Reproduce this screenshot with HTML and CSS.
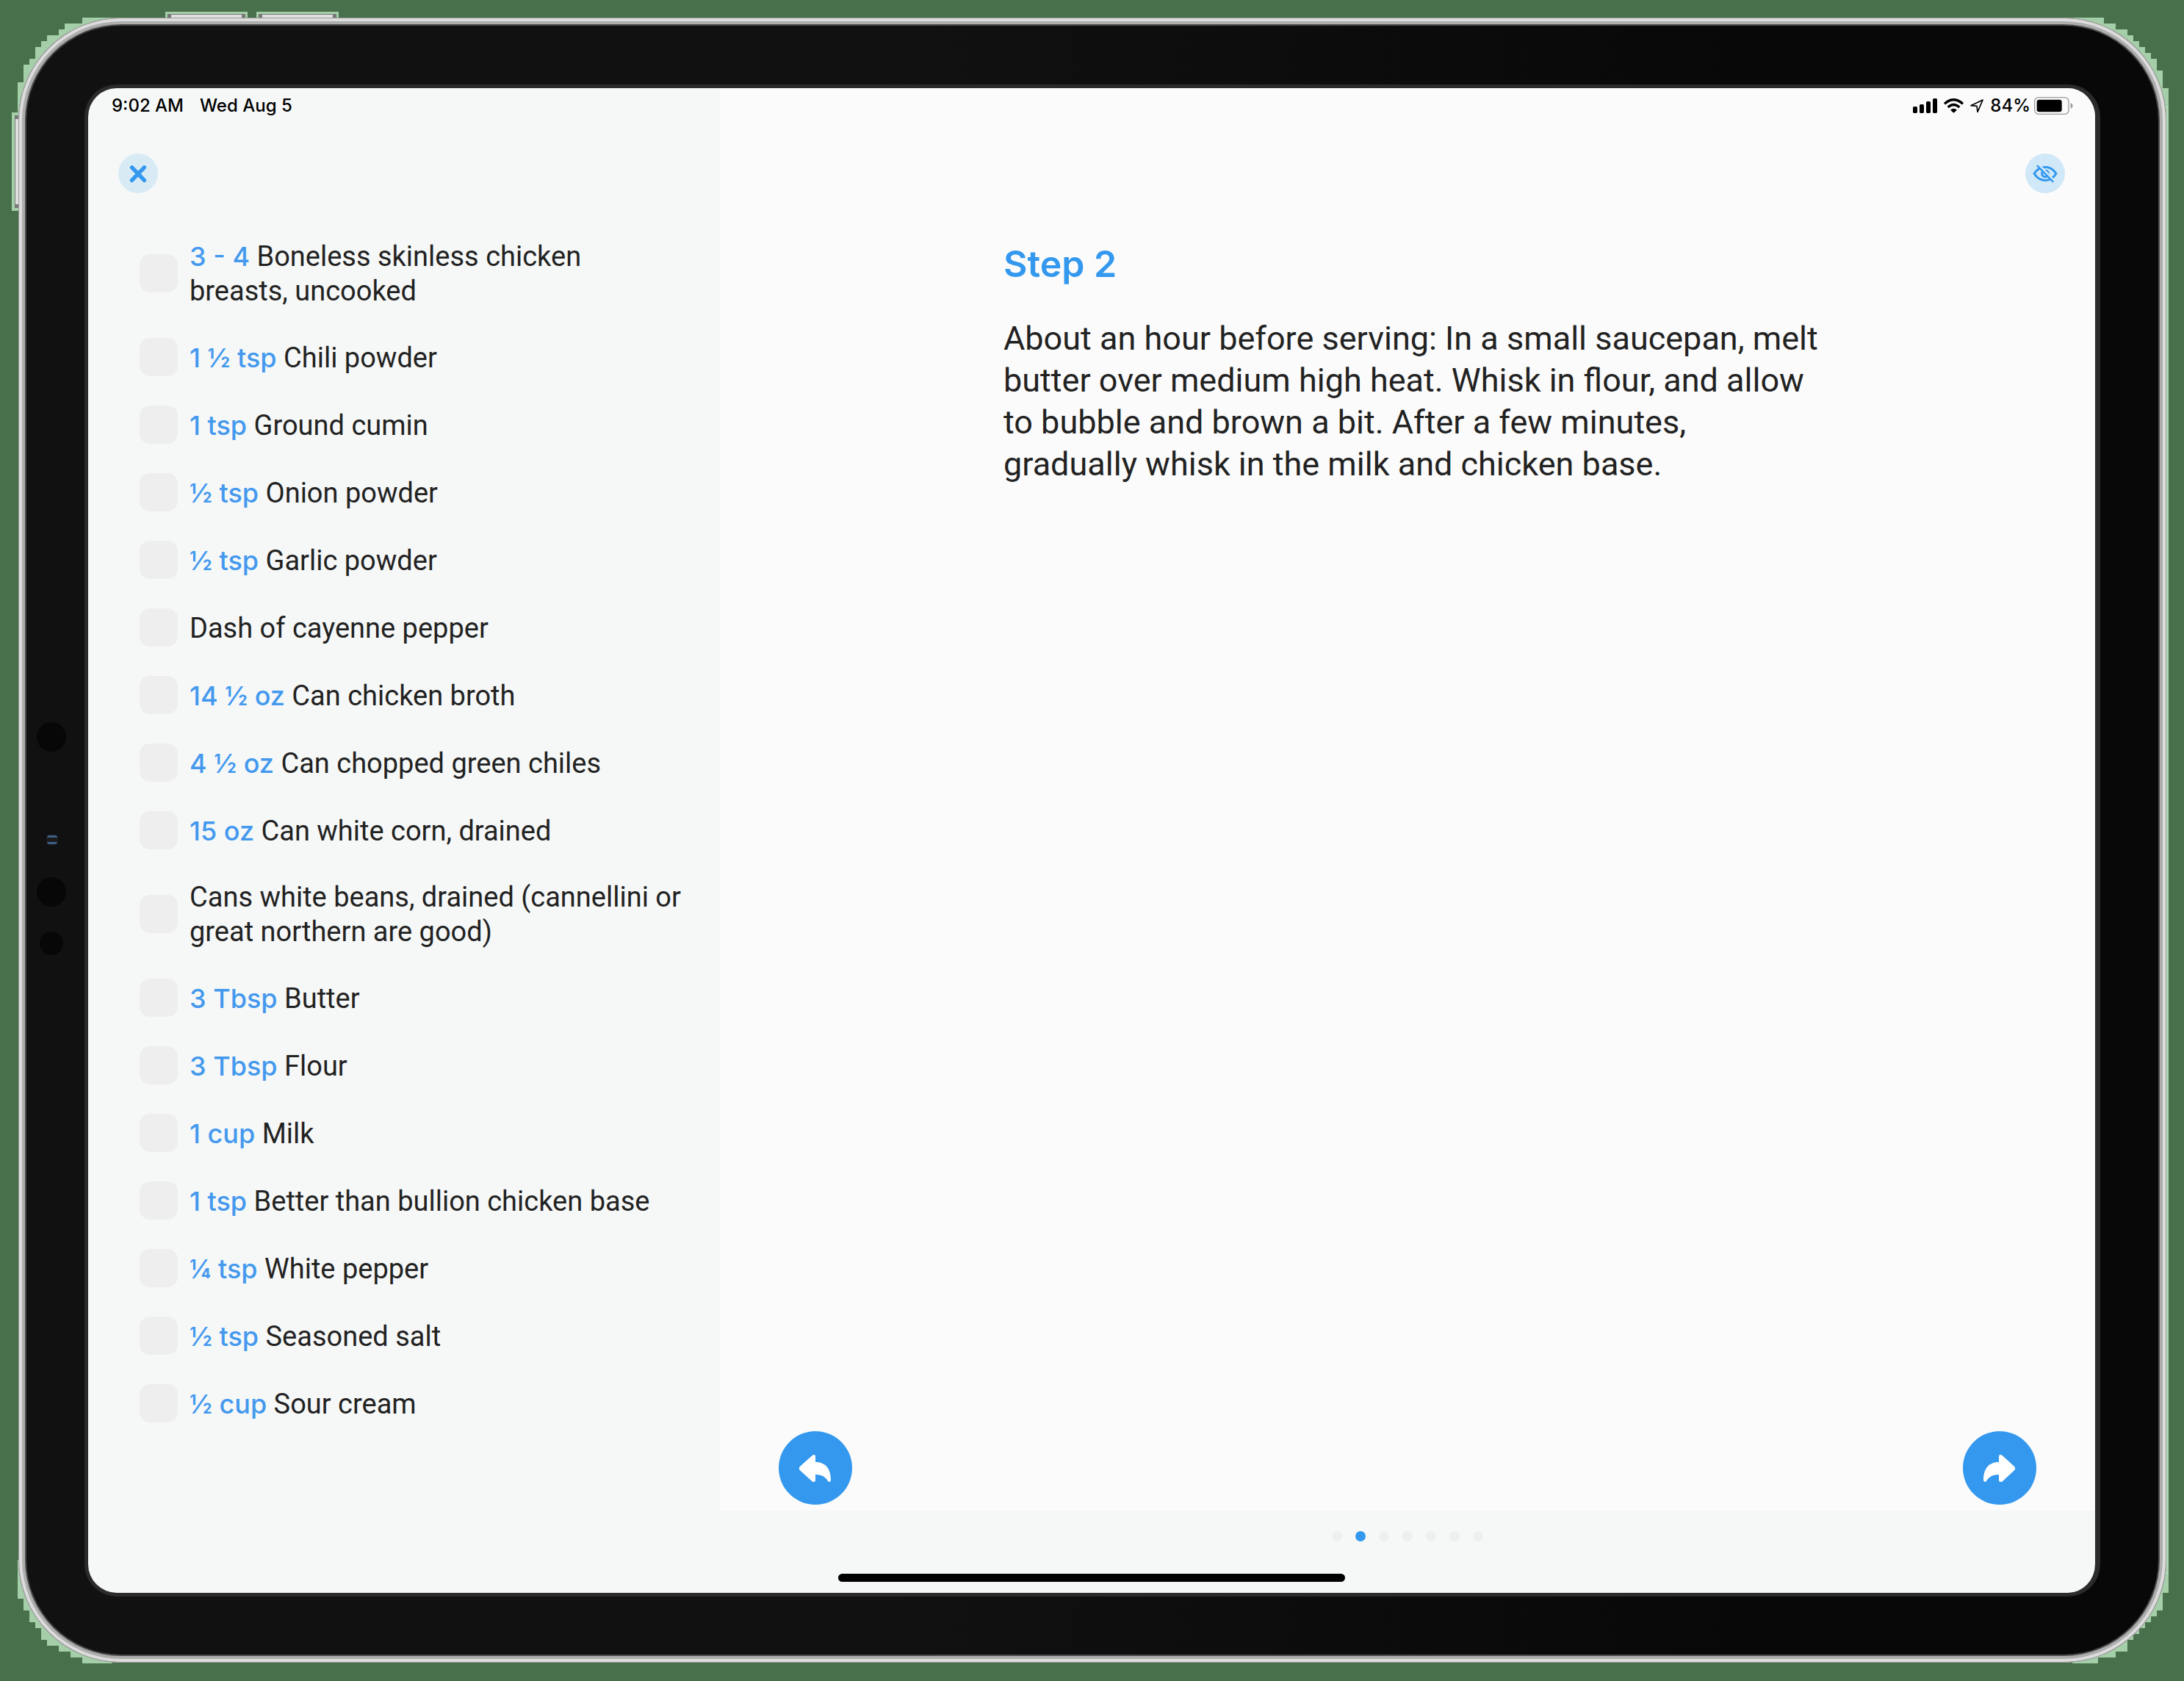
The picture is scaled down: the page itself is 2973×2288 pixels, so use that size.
FILE: index.html
```html
<!DOCTYPE html>
<html lang="en">
<head>
<meta charset="utf-8">
<meta name="viewport" content="width=device-width, initial-scale=1">
<title>Cooking mode – Step 2</title>
<link rel="stylesheet" href="styles.css">
</head>
<body>
<div class="device">
  <svg class="corner corner-tl" viewBox="0 0 128 160" aria-hidden="true"><path d="M128 0H87V8H63V16H55V24H39V32H31V40H23V56H15V64H7V88H-1V130L128 160Z"/></svg>
  <svg class="corner corner-tr" viewBox="0 0 128 160" aria-hidden="true"><path d="M0 0H43V8H59V16H75V24H83V32H91V40H99V48H107V56H115V72H123V96H131V160H0Z"/></svg>
  <svg class="corner corner-bl" viewBox="0 0 128 160" aria-hidden="true"><path d="M-1 20V73H7V89H15V105H23V113H31V129H39V137H55V145H71V153H87V161H128V20Z"/></svg>
  <svg class="corner corner-br" viewBox="0 0 128 160" aria-hidden="true"><path d="M131 0V65H123V89H115V97H107V105H99V113H91V121H83V129H75V145H59V153H35V161H0V0Z"/></svg>
  <span class="edge-right"></span>
  <span class="key key-top key-up"></span>
  <span class="key key-top key-down"></span>
  <span class="key key-side"></span>
  <div class="rim"></div>
  <span class="sensor sensor-large sensor-1"></span>
  <span class="sensor lens"></span>
  <span class="sensor sensor-large sensor-2"></span>
  <span class="sensor sensor-small"></span>

  <div class="screen">
    <header class="status">
      <div class="status-group status-left"><span>9:02 AM</span><span>Wed Aug 5</span></div>
      <div class="status-group status-right">
        <svg class="signal" viewBox="0 0 99 60" aria-label="Signal"><rect y="33" width="18" height="27" rx="5"/><rect x="27" y="24" width="18" height="36" rx="5"/><rect x="54" y="12" width="18" height="48" rx="5"/><rect x="81" width="18" height="60" rx="5"/></svg>
        <svg class="wifi" viewBox="0 0 81 60" aria-label="Wi-Fi"><g fill="none" stroke="#000" stroke-width="10"><path d="M3 22Q40-12 78 22"/><path d="M17 36Q40 15 64 36"/></g><path d="M27 47Q40 35 54 47L43 57Q40 60 38 57Z"/></svg>
        <svg class="location" viewBox="0 0 54 54" aria-label="Location"><path d="M51 3L3 26L27 28L30 52Z" fill="none" stroke="#000" stroke-width="5" stroke-linejoin="round"/></svg>
        <span class="charge">84%
          <svg class="battery" viewBox="0 0 159 72" aria-label="Battery"><rect x="2" y="2" width="139" height="68" rx="16" fill="none" stroke="#999" stroke-width="4"/><rect x="11" y="11" width="102" height="50" rx="9"/><path d="M149 24Q158 28 158 36T149 48Z" fill="#999"/></svg>
        </span>
      </div>
    </header>

    <aside class="sidebar">
      <button class="chip" type="button" aria-label="Close">
        <svg viewBox="0 0 160 160"><path d="M55 56L105 108M105 56L55 108" fill="none" stroke="#3398ee" stroke-width="16" stroke-linecap="round"/></svg>
      </button>
      <ul class="ingredients">
        <li><label><input type="checkbox"><span><b>3 - 4</b> Boneless skinless chicken breasts, uncooked</span></label></li>
        <li><label><input type="checkbox"><span><b>1 ½ tsp</b> Chili powder</span></label></li>
        <li><label><input type="checkbox"><span><b>1 tsp</b> Ground cumin</span></label></li>
        <li><label><input type="checkbox"><span><b>½ tsp</b> Onion powder</span></label></li>
        <li><label><input type="checkbox"><span><b>½ tsp</b> Garlic powder</span></label></li>
        <li><label><input type="checkbox"><span>Dash of cayenne pepper</span></label></li>
        <li><label><input type="checkbox"><span><b>14 ½ oz</b> Can chicken broth</span></label></li>
        <li><label><input type="checkbox"><span><b>4 ½ oz</b> Can chopped green chiles</span></label></li>
        <li><label><input type="checkbox"><span><b>15 oz</b> Can white corn, drained</span></label></li>
        <li><label><input type="checkbox"><span>Cans white beans, drained (cannellini or great northern are good)</span></label></li>
        <li><label><input type="checkbox"><span><b>3 Tbsp</b> Butter</span></label></li>
        <li><label><input type="checkbox"><span><b>3 Tbsp</b> Flour</span></label></li>
        <li><label><input type="checkbox"><span><b>1 cup</b> Milk</span></label></li>
        <li><label><input type="checkbox"><span><b>1 tsp</b> Better than bullion chicken base</span></label></li>
        <li><label><input type="checkbox"><span><b>¼ tsp</b> White pepper</span></label></li>
        <li><label><input type="checkbox"><span><b>½ tsp</b> Seasoned salt</span></label></li>
        <li><label><input type="checkbox"><span><b>½ cup</b> Sour cream</span></label></li>
      </ul>
    </aside>

    <main class="step">
      <div class="step-tools">
        <button class="chip chip-eye" type="button" aria-label="Hide ingredients">
          <svg viewBox="0 0 160 160"><g fill="none" stroke="#3398ee"><path d="M36 81Q52 55 80 55T124 81Q108 108 80 108T36 81Z" stroke-width="9"/><circle cx="80" cy="81" r="13" stroke-width="9"/><path d="M54 47L116 113" stroke="#d0e8f8" stroke-width="13"/><path d="M49 50L111 113" stroke-width="7" stroke-linecap="round"/></g></svg>
        </button>
      </div>
      <article class="step-text">
        <h1>Step 2</h1>
        <p>About an hour before serving: In a small saucepan, melt butter over medium high heat. Whisk in flour, and allow to bubble and brown a bit. After a few minutes, gradually whisk in the milk and chicken base.</p>
      </article>
      <nav class="step-nav" aria-label="Steps">
        <button class="round" type="button" aria-label="Previous step">
          <svg viewBox="0 0 300 300"><path d="M86 145L138 98Q149 92 150 102V126C195 126 213 158 213 200Q211 210 202 205C192 188 178 177 150 177V201Q149 210 138 206L86 159Q81 152 86 145Z"/></svg>
        </button>
        <button class="round" type="button" aria-label="Next step">
          <svg viewBox="0 0 300 300"><path d="M211 145L160 98Q148 92 147 102V126C102 126 84 158 84 200Q86 210 95 205C105 188 119 177 147 177V201Q148 210 160 206L211 159Q216 152 211 145Z"/></svg>
        </button>
      </nav>
    </main>

    <footer class="pager">
      <span class="dot"></span><span class="dot dot-on"></span><span class="dot"></span><span class="dot"></span><span class="dot"></span><span class="dot"></span><span class="dot"></span>
    </footer>
    <span class="home-bar"></span>
  </div>
</div>
</body>
</html>
```
FILE: styles.css
```css
* { box-sizing: border-box; }

body {
  margin: 0;
  padding: 24px 24px 25px 25px;
  min-height: 100vh;
  display: flex;
  background: #48704a;
  font-family: Roboto, "Liberation Sans", sans-serif;
  color: #222;
}

button { border: 0; padding: 0; cursor: pointer; }
button svg { display: block; width: 100%; height: 100%; }

/* Tablet body */
.device {
  position: relative;
  flex: 1;
  display: flex;
  padding: 91px 90px 90px;
}
.rim {
  position: absolute;
  inset: 0;
  border-radius: 140px;
  background: linear-gradient(90deg, #111 0%, #111 40%, #080808 80%);
  box-shadow: inset 0 0 0 1px #9a9a9a, inset 0 0 0 5px #dcdcdc, inset 0 0 0 9px #adadad, inset 0 0 0 11px #4a4a4a;
}
.corner { position: absolute; width: 128px; height: 160px; overflow: visible; fill: #a4cfa9; }
.corner-tl { left: 0; top: 0; }
.corner-tr { right: 0; top: 0; }
.corner-bl { left: 0; bottom: 0; }
.corner-br { right: 0; bottom: 0; }
.edge-right { position: absolute; right: -3px; top: 120px; bottom: 120px; width: 6px; background: #b0d8b4; }

.key { position: absolute; background: #e0e0e0; border: 1px solid #777; }
.key-top { top: -5px; width: 106px; height: 8px; border-width: 1px 5px 0; box-shadow: 0 0 0 3px #a4cfa9; }
.key-up { left: 203px; }
.key-down { left: 327px; }
.key-side { left: -5px; top: 133px; width: 8px; height: 126px; border-width: 5px 0 5px 1px; box-shadow: 0 0 0 4px #a4cfa9; }

.sensor { position: absolute; border-radius: 50%; background: #070707; }
.sensor-large { left: 25px; width: 40px; height: 40px; }
.sensor-1 { top: 959px; }
.sensor-2 { top: 1170px; }
.sensor-small { left: 29px; top: 1244px; width: 32px; height: 32px; }
.lens {
  left: 38px;
  top: 1111px;
  width: 16px;
  height: 16px;
  background: linear-gradient(#1b1b1b 2px, #3c5f86 2px 5px, #1b1b1b 5px 11px, #3c5f86 11px 14px, #1b1b1b 14px);
}

/* Display */
.screen {
  position: relative;
  flex: 1;
  display: grid;
  grid-template-columns: minmax(0, 215fr) minmax(0, 468fr);
  grid-template-rows: 48px 1fr 112px;
  border: solid #2b2b2b;
  border-width: 5px 7px 5px 5px;
  border-radius: 44px;
  background: #f6f8f8;
  overflow: hidden;
}

.status {
  grid-area: 1 / 1 / 2 / 3;
  z-index: 1;
  display: flex;
  justify-content: space-between;
  padding: 0 30px 0 32px;
  font-family: Inter, "Liberation Sans", sans-serif;
  font-size: 24px;
  font-weight: 500;
  line-height: 48px;
  color: #000;
}
.status-group { display: flex; align-items: center; }
.status-left { gap: 22px; }
.status-right { gap: 9px; }
.charge { display: flex; align-items: center; gap: 5px; }
.signal { width: 33px; height: 20px; }
.wifi { width: 27px; height: 20px; }
.location { width: 18px; height: 18px; }
.battery { width: 53px; height: 24px; }

/* Ingredients */
.sidebar { grid-area: 1 / 1 / 4 / 2; padding: 89px 48px 40px 41px; }
.chip {
  display: block;
  width: 54px;
  height: 54px;
  border-radius: 50%;
  background: #d8ebf5;
}
.chip-eye { background: #d0e8f8; }
.ingredients {
  display: flex;
  flex-direction: column;
  gap: 40px;
  margin: 61px 0 0;
  padding: 0 0 0 29px;
  list-style: none;
  font-size: 38px;
  line-height: 47px;
}
.ingredients li:first-child { padding-right: 24px; }
.ingredients label { display: flex; align-items: center; gap: 16px; }
.ingredients label span { padding-top: 2px; }
.ingredients input {
  appearance: none;
  flex: none;
  width: 52px;
  height: 52px;
  margin: 0;
  border-radius: 14px;
  background: #eee;
}
.ingredients b { font-family: Inter, "Liberation Sans", sans-serif; font-size: 36px; font-weight: 500; line-height: 40px; color: #4499ee; }

/* Current step */
.step {
  grid-area: 1 / 2 / 3 / 3;
  display: flex;
  flex-direction: column;
  padding: 89px 0 8px;
  background: #fbfbfb;
}
.step-tools { display: flex; justify-content: flex-end; padding-right: 41px; }
.step-text { flex: 1; width: 100%; max-width: 1140px; margin: 64px auto 0; padding-left: 20px; }
.step-text h1 { margin: 0 0 41px; font-family: Inter, "Liberation Sans", sans-serif; font-size: 50px; line-height: 64px; font-weight: 600; color: #3398ee; }
.step-text p { margin: 0; font-size: 45px; line-height: 57px; }
.step-nav { display: flex; justify-content: space-between; padding: 0 80px; }
.round { width: 100px; height: 100px; border-radius: 50%; background: #3398ee; fill: #fff; }

.pager { grid-area: 3 / 2 / 4 / 3; display: flex; justify-content: center; align-items: center; gap: 18px; padding-bottom: 42px; }
.dot { width: 14px; height: 14px; border-radius: 50%; background: #eeefef; }
.dot-on { background: #3398ee; }

.home-bar {
  position: absolute;
  left: 50%;
  bottom: 15px;
  width: 690px;
  height: 11px;
  margin-left: -345px;
  border-radius: 6px;
  background: #000;
}
```
